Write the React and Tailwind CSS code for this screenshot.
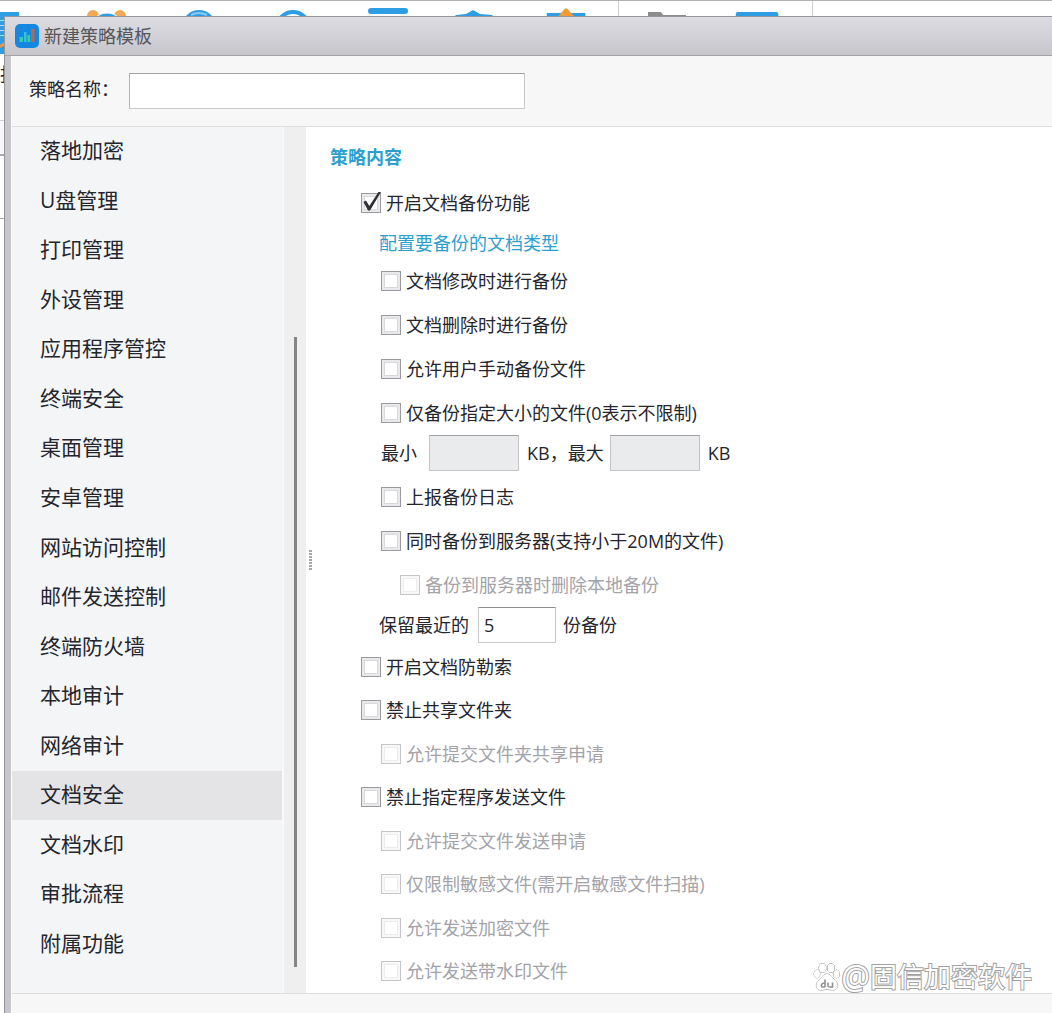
import { useState } from 'react';

const MENU = [
  '落地加密', 'U盘管理', '打印管理', '外设管理', '应用程序管控', '终端安全',
  '桌面管理', '安卓管理', '网站访问控制', '邮件发送控制', '终端防火墙', '本地审计',
  '网络审计', '文档安全', '文档水印', '审批流程', '附属功能',
];

const BACKUP_TRIGGERS = [
  { id: 'onModify', label: '文档修改时进行备份' },
  { id: 'onDelete', label: '文档删除时进行备份' },
  { id: 'manual', label: '允许用户手动备份文件' },
  { id: 'bySize', label: '仅备份指定大小的文件(0表示不限制)' },
];

const PROTECTION = [
  { id: 'ransom', label: '开启文档防勒索', level: 0 },
  { id: 'share', label: '禁止共享文件夹', level: 0 },
  { id: 'shareApply', label: '允许提交文件夹共享申请', level: 1, disabled: true },
  { id: 'send', label: '禁止指定程序发送文件', level: 0 },
  { id: 'sendApply', label: '允许提交文件发送申请', level: 1, disabled: true },
  { id: 'sensitive', label: '仅限制敏感文件(需开启敏感文件扫描)', level: 1, disabled: true },
  { id: 'sendEncrypted', label: '允许发送加密文件', level: 1, disabled: true },
  { id: 'sendWatermark', label: '允许发送带水印文件', level: 1, disabled: true },
];

const INDENT = ['pl-[55px]', 'pl-[75px]', 'pl-[94px]'];

function Check({ id, label, level, disabled, defaultChecked, grow }) {
  return (
    <div className={`flex items-center ${INDENT[level]} ${grow ? 'min-h-10 flex-1' : 'h-11'}`}>
      <span className="relative flex">
        <input
          id={id}
          type="checkbox"
          disabled={disabled}
          defaultChecked={defaultChecked}
          className="peer size-5 appearance-none border border-[#9a9a9f] bg-white shadow-[inset_0_0_0_2px_#e9e9eb,inset_0_0_0_3px_#d9d9dc] disabled:border-[#c6c6ca] disabled:shadow-[inset_0_0_0_2px_#f8f8f8,inset_0_0_0_3px_#ececee]"
        />
        <svg viewBox="0 0 20 20" className="pointer-events-none absolute inset-0 hidden size-5 overflow-visible peer-checked:block">
          <path d="M2.5 9 L5 7.5 L8.3 13 L17.5 -1 L20 -1 L9 17.5 L7 17.5 Z" fill="#303034" />
        </svg>
      </span>
      <label htmlFor={id} className={`pl-[5px] ${disabled ? 'text-[#a3a3a8]' : ''}`}>{label}</label>
    </div>
  );
}

function Toolbar() {
  return (
    <div className="flex h-4 shrink-0 overflow-hidden border-t border-[#b0b0b4] bg-white">
      <svg width="60" height="16" viewBox="0 0 60 16"><rect y="11" width="19" height="8" fill="#2f9de4" /></svg>
      <svg width="93" height="16" viewBox="0 0 93 16">
        <circle cx="33" cy="15" r="6" fill="#f0aa55" />
        <circle cx="60" cy="15" r="6" fill="#f0aa55" />
        <circle cx="47" cy="29" r="17" fill="#2f9de4" stroke="#fff" />
      </svg>
      <svg width="93" height="16" viewBox="0 0 93 16">
        <circle cx="46" cy="26" r="17" fill="#2f9de4" />
        <path d="M38 14 q8 -4 16 0" stroke="#8bcbf2" strokeWidth="2" fill="none" />
      </svg>
      <svg width="93" height="16" viewBox="0 0 93 16"><circle cx="47" cy="27" r="16" fill="#fff" stroke="#2f9de4" strokeWidth="4" /></svg>
      <svg width="93" height="16" viewBox="0 0 93 16"><rect x="29" y="7" width="40" height="6" rx="3" fill="#2f9de4" /></svg>
      <svg width="93" height="16" viewBox="0 0 93 16"><path d="M22 16 L24 14 L34 13 L41 9 L48 13 L60 14 L62 16 Z" fill="#2f9de4" /></svg>
      <svg width="94" height="16" viewBox="0 0 94 16" className="border-r border-[#cfcfd3]">
        <rect x="22" y="12" width="39" height="5" fill="#2f9de4" />
        <path d="M33 16 L40 8 Q41.500 6.500 43 8 L50 16 Z" fill="#f39a38" />
      </svg>
      <svg width="97" height="16" viewBox="0 0 97 16"><path d="M29 17 V11 H42 L44 14 H67 V17 Z" fill="#8c8c8c" /></svg>
      <svg width="97" height="16" viewBox="0 0 97 16" className="border-r border-[#cfcfd3]"><rect x="20" y="11" width="43" height="8" rx="2" fill="#2f9de4" /></svg>
    </div>
  );
}

// sliver of the main window that stays visible left of the dialog
function MainWindowEdge() {
  return (
    <div className="w-1 shrink-0 overflow-hidden bg-white">
      <svg width="4" height="38" viewBox="0 0 4 38" className="block">
        <rect width="4" height="38" fill="#2f9de4" />
        <path d="M0 4.500 H4 M0 9.500 H4 M0 14.500 H4 M0 19.500 H4" stroke="#b5dcf6" />
        <path d="M0 29 L4 26 V30 L0 32 Z" fill="#e8964a" />
      </svg>
      <div className="flex h-[67px] border-b border-[#cfcfd8] pt-2 text-lg/6">报</div>
      <div className="h-[35px] border-b-2 border-[#a9a9ae] bg-[#f8f8fb]" />
      <div className="h-[63px] border-b border-[#a9a9ae]" />
    </div>
  );
}

function AppIcon() {
  return (
    <svg width="24" height="24" viewBox="0 0 24 24">
      <rect width="24" height="24" rx="5" fill="#1487e0" />
      <rect x="4.500" y="13" width="3.500" height="5" fill="#35cdb0" />
      <rect x="9" y="8" width="2.500" height="10" fill="#36bfe0" />
      <rect x="12.500" y="11" width="2.500" height="7" fill="#35d0a0" />
      <rect x="16" y="5" width="3.500" height="13" fill="#b8684a" />
    </svg>
  );
}

function Watermark() {
  return (
    <div className="pointer-events-none absolute right-5 bottom-4 flex items-center text-[27px] leading-10 text-white [-webkit-text-stroke:2px_#a2a2a2] [paint-order:stroke_fill]">
      <svg width="28" height="30" viewBox="0 0 28 30" fill="#fff" stroke="#909090">
        <ellipse cx="9.500" cy="6" rx="3.500" ry="4.500" />
        <ellipse cx="18" cy="6" rx="3.500" ry="4.500" />
        <ellipse cx="4" cy="12" rx="3" ry="4" />
        <ellipse cx="23.500" cy="12" rx="3" ry="4" />
        <path d="M14 12 C10 12 9 16 6 18.500 C1.500 22 3 28 8 28 C11 28 12 27.300 14 27.300 C16 27.300 17 28 20 28 C25 28 26.500 22 22 18.500 C19 16 18 12 14 12 Z" />
        <path d="M12 17.500 V25 M12 21.500 C8 20 7.500 25 9.500 25 H12 M15 20.500 V24 Q15.500 25 17 25 H19.500 V20.500" fill="none" strokeWidth="1.600" />
      </svg>
      <span className="text-[32px]">@</span>
      <span>固信加密软件</span>
    </div>
  );
}

export default function App() {
  const [active, setActive] = useState('文档安全');

  return (
    <div className="relative flex min-h-screen flex-col overflow-hidden bg-white font-['Open_Sans','Noto_Sans_CJK_SC',sans-serif] text-lg/6 text-[#25252d]">
      <Toolbar />
      <div className="flex flex-1">
        <MainWindowEdge />

        <section className="flex min-w-0 flex-1 flex-col border-t border-l border-[#96969b] bg-[#c6c6cb]">
          <header className="flex h-[39px] shrink-0 items-center gap-[5px] border-b border-[#a3a3a8] bg-linear-to-b from-[#dcdce2] to-[#c6c6cb] pl-2.5">
            <AppIcon />
            <h1 className="text-[#55555c]">新建策略模板</h1>
          </header>

          <div className="ml-1.5 flex flex-1 flex-col border-l border-white bg-[#f7f7f7]">
            <div className="flex h-[71px] shrink-0 items-center border-b border-[#dedede] pl-[17px]">
              <label htmlFor="name" className="w-[100px] pb-1">策略名称：</label>
              <input id="name" type="text" className="h-9 w-[396px] border border-[#c9c9c9] border-t-[#a2a2a2] border-l-[#b4b4b4] bg-white px-2 outline-none" />
            </div>

            <div className="flex flex-1">
              <nav className="flex w-[270px] shrink-0 flex-col bg-[#f3f5f7] pb-6">
                {MENU.map(item => (
                  <button
                    key={item}
                    onClick={() => setActive(item)}
                    className={`min-h-11 flex-1 pb-[3px] pl-7 text-left text-[21px] ${item === active ? 'bg-[#e4e4e6]' : ''}`}
                  >
                    {item}
                  </button>
                ))}
              </nav>
              <div className="flex w-6 shrink-0 flex-col items-center border-l-2 border-[#f9f9f9] bg-[#efefef] pb-[26px]">
                <div className="flex-1" />
                <div className="h-[630px] w-[3px] bg-[#858585]" />
              </div>

              <main className="flex min-w-0 flex-1 bg-white">
                <div className="flex w-0 shrink-0 items-center">
                  <div className="ml-[3px] h-5 w-[3px] shrink-0 bg-[repeating-linear-gradient(#a8a8a8_0_2px,#fff_2px_3px)]" />
                </div>
                <div className="flex flex-1 flex-col">
                  <h2 className="h-[54px] pt-[18px] pl-6 font-bold text-[#2b9fd0]">策略内容</h2>
                  <Check id="backup" label="开启文档备份功能" level={0} defaultChecked />
                  <div className="h-[34px] pt-1.5 pl-[73px]">
                    <a href="#types" className="text-[#2b9fd0]">配置要备份的文档类型</a>
                  </div>
                  {BACKUP_TRIGGERS.map(c => <Check key={c.id} level={1} {...c} />)}
                  <div className="mb-1 flex h-9 items-center pl-[75px]">
                    <label htmlFor="min" className="w-12">最小</label>
                    <input id="min" type="text" disabled className="h-9 w-[90px] border border-[#c4c4c6] border-t-[#a2a2a6] bg-[#e9ebed] px-2" />
                    <span className="pl-2">KB，</span>
                    <label htmlFor="max" className="w-[42px]">最大</label>
                    <input id="max" type="text" disabled className="h-9 w-[90px] border border-[#c4c4c6] border-t-[#a2a2a6] bg-[#e9ebed] px-2" />
                    <span className="pl-2">KB</span>
                  </div>
                  <Check id="report" label="上报备份日志" level={1} />
                  <Check id="server" label="同时备份到服务器(支持小于20M的文件)" level={1} />
                  <Check id="removeLocal" label="备份到服务器时删除本地备份" level={2} disabled />
                  <div className="mb-0.5 flex h-9 items-center pl-[73px]">
                    <label htmlFor="keep" className="w-[99px]">保留最近的</label>
                    <input id="keep" type="text" defaultValue="5" className="h-9 w-[78px] border border-[#c9c9c9] border-t-[#8f8f92] bg-white px-[5px] outline-none" />
                    <span className="pl-[7px]">份备份</span>
                  </div>
                  {PROTECTION.map(c => <Check key={c.id} grow {...c} />)}
                </div>
              </main>
            </div>

            <footer className="h-5 shrink-0 border-t border-[#dcdcdc]" />
          </div>
        </section>
      </div>
      <Watermark />
    </div>
  );
}
